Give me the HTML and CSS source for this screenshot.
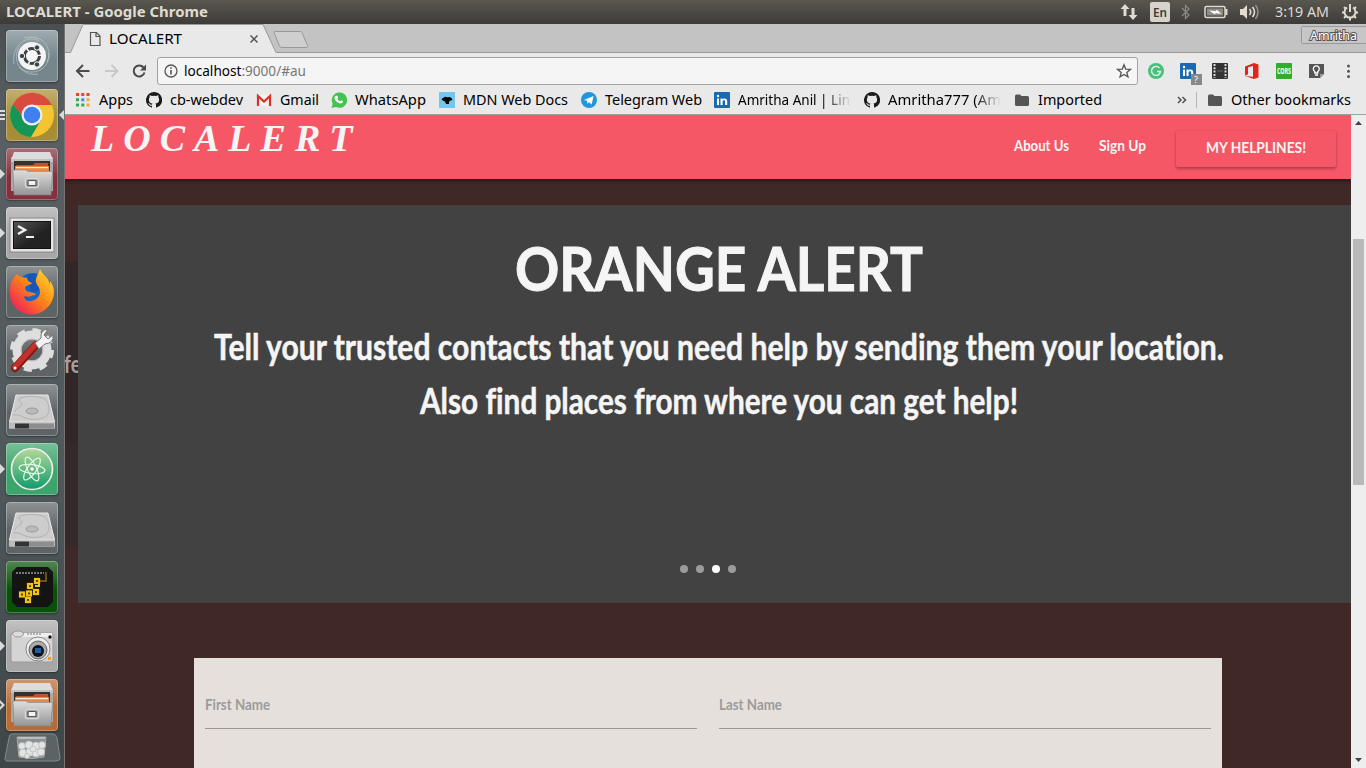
FILE: index.html
```html
<!DOCTYPE html>
<html lang="en">
<head>
<meta charset="utf-8">
<title>LOCALERT</title>
<link rel="stylesheet" href="styles.css">
</head>
<body>
<svg class="defs" width="0" height="0">
  <defs>
    <linearGradient id="metal" x1="0" y1="0" x2="0" y2="1"><stop offset="0" stop-color="#dedede"/><stop offset="1" stop-color="#959595"/></linearGradient>
    <linearGradient id="screen" x1="0" y1="0" x2="1" y2="1"><stop offset="0" stop-color="#555"/><stop offset=".6" stop-color="#222"/></linearGradient>
    <linearGradient id="fox" x1="1" y1="0" x2="0" y2="1"><stop offset="0" stop-color="#ffe83a"/><stop offset=".45" stop-color="#ff8a16"/><stop offset=".8" stop-color="#f4364a"/><stop offset="1" stop-color="#e01a6d"/></linearGradient>
    <linearGradient id="atomg" x1="0" y1="0" x2="0" y2="1"><stop offset="0" stop-color="#b5d89a"/><stop offset="1" stop-color="#0d9b6a"/></linearGradient>
    <symbol id="github" viewBox="0 0 16 16"><path fill="#1b1b1b" d="M8 0a8 8 0 0 0-2.5 15.6c.4.1.5-.2.5-.4v-1.500c-2.200.5-2.700-1-2.700-1-.4-.9-.9-1.200-.9-1.200-.7-.5.1-.5.1-.5.8.1 1.200.8 1.200.8.7 1.300 1.900.9 2.300.7.1-.5.3-.9.5-1.100-1.800-.2-3.600-.9-3.600-4 0-.9.300-1.600.8-2.100-.1-.2-.4-1 .1-2.100 0 0 .7-.2 2.200.8a7.600 7.600 0 0 1 4 0c1.500-1 2.200-.8 2.200-.8.4 1.100.200 1.900.1 2.100.5.6.8 1.300.8 2.100 0 3.100-1.900 3.700-3.700 3.900.3.300.6.8.6 1.500v2.400c0 .2.1.5.6.4A8 8 0 0 0 8 0z"/></symbol>
    <symbol id="folder" viewBox="0 0 16 16"><path fill="#555" d="M1 4q0-1.500 1.500-1.500H6L7.500 4h6Q15 4 15 5.500v7q0 1.500-1.500 1.500h-11Q1 14 1 12.500z"/></symbol>
    <symbol id="linkedin" viewBox="0 0 16 16"><rect width="16" height="16" rx="1" fill="#1b69b3"/><path fill="#fff" d="M3 6.500h2V13H3zM6.500 6.500h2v.9c1-1.600 4.700-1.500 4.700 1.600v4h-2.100V9.600c0-2-2.500-1.800-2.500 0V13H6.500z"/><circle cx="4" cy="4" r="1.200" fill="#fff"/></symbol>
    <symbol id="drawer" viewBox="0 0 52 52"><path d="M5 9h42v34H5z" fill="#a8a8a8"/><path d="M5 12l3-8h36l3 8z" fill="#dcdcdc"/><path d="M5 11h42v3H5z" fill="#c2c2c2"/><path d="M8 13h36v10H8z" fill="#38322f"/><path d="M10 17h17l2-2h13v6H10z" fill="#b9562c"/><path d="M9 18h34v5H9z" fill="#e98747"/><path d="M10 19h32v1.200H10z" fill="#fff1cf"/><path d="M7 22h13l2 1.500h24.500L45 47H8z" fill="url(#metal)" stroke="#858585" stroke-width=".6"/><rect x="19.500" y="30.500" width="13" height="9" rx="2" fill="#999" stroke="#d6d6d6" stroke-width="1.500"/><rect x="22" y="32.500" width="8" height="5" rx="1" fill="#f3f3f3" stroke="#555" stroke-width="1.200"/></symbol>
    <symbol id="disk" viewBox="0 0 52 52"><path d="M10 11h32l7 27v6q0 1-1 1H4q-1 0-1-1v-6z" fill="#a9a9a9"/><path d="M10 11h32l6.500 27h-45z" fill="#cdcdcd" stroke="#e6e6e6" stroke-width="1"/><path d="M13 15c5-4 20-3 26 0 4 3 5 12 3 15-3 6-17 7-25 3-4-2-6-3-10-2M13 15c-1 3 5 4 2 7s-5 2-6 6" fill="none" stroke="#b2b2b2"/><ellipse cx="26" cy="27" rx="6" ry="3" fill="#bbb" stroke="#999"/><path d="M3 39h46v5H3z" fill="#bdbdbd"/><path d="M9 39.500h14v5H9z" fill="#333"/><path d="M23 39.500h25v5H23z" fill="#8d8d8d"/></symbol>
  </defs>
</svg>

<header class="panel">
  <svg class="t" width="202" height="24"><text class="wt" x="0" y="17" textLength="202" lengthAdjust="spacingAndGlyphs">LOCALERT - Google Chrome</text></svg>
  <div class="tray">
    <svg width="18" height="16" viewBox="0 0 18 16" class="net"><path fill="#dfdbd2" d="M5 0l4.500 5H6.500v7h-3V5H.5zM13 16l-4.500-5h3V4h3v7h3z"/></svg>
    <svg width="20" height="20" class="lang"><rect width="20" height="20" rx="2" fill="#d7d3ca"/><text x="3" y="15" textLength="14" lengthAdjust="spacingAndGlyphs">En</text></svg>
    <svg width="10" height="16" viewBox="0 0 10 16" class="bt"><path fill="none" stroke="#8c8980" stroke-width="1.200" d="M1 4l7 7-3.500 3.500v-13L8 5l-7 7"/></svg>
    <svg width="25" height="14" viewBox="0 0 25 14" class="bat"><rect x="1" y="1.500" width="20" height="11" rx="1.500" fill="none" stroke="#dfdbd2" stroke-width="1.500"/><rect x="3" y="3.500" width="16" height="7" fill="#8f8c84"/><path d="M22.500 4v6" stroke="#dfdbd2" stroke-width="2"/><path fill="#fff" d="M5 5.500l7 .8.500-1.800 5 4.500-6-1-.5 1.500z"/></svg>
    <svg width="20" height="16" viewBox="0 0 20 16" class="vol"><path fill="#dfdbd2" d="M0 5h3l4-4v14l-4-4H0z"/><path fill="none" stroke="#dfdbd2" stroke-width="1.600" d="M9.500 5q2.500 3 0 6M12.500 3q4 5 0 10"/><path fill="none" stroke="#918e86" stroke-width="1.600" d="M15.500 1q5 7 0 14"/></svg>
    <svg class="t clock" width="54" height="24"><text x="0" y="17" textLength="54" lengthAdjust="spacingAndGlyphs">3:19 AM</text></svg>
    <svg width="18" height="18" viewBox="0 0 18 18" class="power"><g fill="none" stroke="#dfdbd2"><path stroke-width="2" d="M6 4.500a5.500 5.500 0 1 0 6 0"/><path stroke-width="2" d="M9 1v8"/><path stroke-width="2" d="M1 9.500h3M14 9.500h3M9 14.500v3M3 4l2 2M15 4l-2 2M3 15l2-2M15 15l-2-2"/></g></svg>
  </div>
</header>

<div class="desk">
<aside class="launcher">
  <div class="tile slate"><svg viewBox="0 0 52 52"><g fill="none" stroke="#cbd5d8" stroke-opacity=".55"><path d="M8 34C5 15 22 4 33 11M18 8c20-5 29 12 23 24M43 23c1 19-20 24-30 14M32 44c-16 3-28-14-18-28"/></g><circle cx="26" cy="26" r="14" fill="#f4f4f4"/><circle cx="26" cy="26" r="7.500" fill="none" stroke="#3a4447" stroke-width="3" stroke-dasharray="14 1.700"/><g fill="#3a4447" stroke="#f4f4f4"><circle cx="16" cy="26" r="2.700"/><circle cx="31" cy="17.500" r="2.700"/><circle cx="31" cy="34.500" r="2.700"/></g></svg></div>
  <div class="tile gold"><i class="running triple"></i><i class="focus"></i><svg viewBox="0 0 52 52"><circle cx="26" cy="26" r="22" fill="#f5c431"/><path d="M7 15A22 22 0 0 1 46 16H26L17 31z" fill="#d94a3f"/><path d="M7 15A22 22 0 0 0 25 48l10-17-17-1z" fill="#159556"/><circle cx="26" cy="26" r="10.500" fill="#f0f0f0"/><circle cx="26" cy="26" r="8.300" fill="#4080ee"/></svg></div>
  <div class="tile wine"><i class="running"></i><svg><use href="#drawer"/></svg></div>
  <div class="tile silver"><i class="running"></i><svg viewBox="0 0 52 52"><rect x="4" y="11" width="44" height="34" fill="#e4e4e4" stroke="#888"/><rect x="7.500" y="14.500" width="37" height="27" fill="url(#screen)" stroke="#111"/><path d="M12 19l7 4-7 4" fill="none" stroke="#eee" stroke-width="2.500"/><path d="M20 30h8" stroke="#eee" stroke-width="2"/></svg></div>
  <div class="tile gray"><svg viewBox="0 0 52 52"><circle cx="27" cy="24" r="17" fill="#1267cf"/><path d="M21 9q9-3 14 2v12l-10 4z" fill="#1a55b5"/><path d="M34 3c-2 6-7 11-2 17 4 6 2 13-7 15-6 1-8-4-6-5 5 2 6-1 11-1-1-4-11-1-11-7 0-3 6-3 7-5-2-1-5-2-5-5-5-1-8-1-10-4C1 17 2 34 10 42c11 11 28 7 35-5 5-9 3-17-1-22v4C42 10 37 10 34 3z" fill="url(#fox)"/></svg></div>
  <div class="tile gray"><svg viewBox="0 0 52 52"><circle cx="26" cy="25" r="15" fill="none" stroke="#dedede" stroke-width="9"/><circle cx="26" cy="25" r="20" fill="none" stroke="#dedede" stroke-width="4" stroke-dasharray="8 7.700"/><circle cx="26" cy="25" r="11" fill="none" stroke="#b9b9b9"/><path d="M9 43l21-23" stroke="#8c1715" stroke-width="8" stroke-linecap="round"/><path d="M9 42l21-23" stroke="#c2322c" stroke-width="5.500" stroke-linecap="round"/><circle cx="9" cy="43" r="1.500" fill="#fff"/><path d="M29 18l6-5q-1-8 7-9l-4 6 4 4 5-4q1 8-8 9l-6 5z" fill="#f2f2f2" stroke="#777"/></svg></div>
  <div class="tile gray"><svg><use href="#disk"/></svg></div>
  <div class="tile green"><i class="running"></i><svg viewBox="0 0 52 52"><circle cx="26" cy="26" r="20.500" fill="url(#atomg)" stroke="#ededed" stroke-width="1.700"/><g fill="none" stroke="#e8fae9" stroke-width="1.200" transform="translate(26 26)"><ellipse rx="13" ry="4.500" transform="rotate(7)"/><ellipse rx="13" ry="4.500" transform="rotate(65)"/><ellipse rx="13" ry="4.500" transform="rotate(-55)"/></g><circle cx="26" cy="26" r="1.800" fill="#fff"/></svg></div>
  <div class="tile gray"><svg><use href="#disk"/></svg></div>
  <div class="tile board"><svg viewBox="0 0 52 52"><path d="M11 6h31l5 5v30l-5 5H11l-5-5V11z" fill="#141414"/><path d="M10 12h28" stroke="#777" stroke-width="2" stroke-dasharray="2 1"/><path d="M32 20h8v-9" fill="none" stroke="#8a6a0c" stroke-width="1.500"/><g fill="#3c3100" stroke="#f1c40f" stroke-width="2.200"><rect x="29" y="18" width="4" height="4"/><rect x="22" y="23" width="4" height="4"/><rect x="28" y="29" width="4" height="4"/><rect x="21" y="30.500" width="4" height="4"/><rect x="14" y="31.500" width="4" height="4"/><rect x="20" y="37" width="4" height="4"/></g><path d="M33 19v6h-4" fill="none" stroke="#f1c40f" stroke-width="2"/></svg></div>
  <div class="tile silver"><i class="running"></i><svg viewBox="0 0 52 52"><rect x="5" y="13" width="42" height="29" rx="2" fill="#d4d4d4" stroke="#999"/><path d="M6 13h40v4H6z" fill="#eee"/><ellipse cx="12" cy="14" rx="5.500" ry="3" fill="#ddd" stroke="#999"/><path d="M21 14h15" stroke="#777" stroke-dasharray="2 1"/><circle cx="32" cy="29" r="12" fill="#eee" stroke="#888"/><circle cx="32" cy="30" r="9" fill="#aaa" stroke="#666"/><circle cx="32" cy="31" r="6" fill="#111"/><rect x="29" y="28" width="6" height="5" fill="#215cae"/><circle cx="44" cy="17" r="1.700" fill="#111"/><rect x="42" y="37" width="3" height="3" fill="#f29b1f"/></svg></div>
  <div class="tile orange"><i class="running open"></i><svg><use href="#drawer"/></svg></div>
  <svg class="trash" width="57" height="30" viewBox="0 0 57 30"><path d="M8 1h41q3 0 4 4l3 20q0 3-4 3H4q-4 0-3-3L5 5q0-4 3-4z" fill="#5c6364" stroke="#838989"/><path d="M13 4h29l-2 20q-12 3-25 0z" fill="#8b9191" stroke="#aaa"/><path d="M14 5h27" stroke="#e4e4e4"/><g fill="#e3e5e3" stroke="#b4b8b6" stroke-width=".7"><circle cx="18" cy="13" r="3.500"/><circle cx="25" cy="12" r="4"/><circle cx="32" cy="13" r="4"/><circle cx="38" cy="12" r="3.500"/><circle cx="19" cy="20" r="4"/><circle cx="26" cy="19" r="4"/><circle cx="32" cy="20" r="4"/><circle cx="37" cy="19" r="3.700"/><circle cx="23" cy="23" r="2.500"/><circle cx="29" cy="16" r="3"/></g></svg>
</aside>

<main class="browser">
  <div class="tabs">
    <svg class="tabshape" width="246" height="29" viewBox="0 0 246 29"><path d="M0 28.500h5.500L18 .5h180l13 28H246V29H0z" fill="#e9e9e9"/><path d="M0 28.500h5.500L18 .5h180l13 28H246" fill="none" stroke="#999"/><path d="M209.500 7.500H235q1.500 0 2 1l5.500 13q.5 2-1 2H217q-2 0-2.500-1.500l-5-12.500q-.5-2 0-2z" fill="#cfcfcf" stroke="#999"/><path d="M25.500 8.500h6l3.500 3.500v9.500h-9.500zM31 8.500V12.500h4" fill="none" stroke="#555" stroke-width="1.200"/><path d="M185.500 11.500l7 7M192.500 11.500l-7 7" stroke="#555" stroke-width="1.500"/><text x="44" y="20" textLength="73" lengthAdjust="spacingAndGlyphs">LOCALERT</text></svg>
    <svg class="user" width="65" height="19"><rect x=".5" y=".5" width="66" height="17" rx="1" fill="#c6c6c6" stroke="#999"/><text x="9" y="14" textLength="47" lengthAdjust="spacingAndGlyphs">Amritha</text></svg>
  </div>
  <div class="toolbar">
    <svg class="arrows" width="76" height="16" viewBox="0 0 76 16"><path d="M17.500 8H5M11 2L5 8l6 6" fill="none" stroke="#4b4b4b" stroke-width="2"/><path d="M33 8h12.500M39.500 2l6 6-6 6" fill="none" stroke="#c8c8c8" stroke-width="2"/><path d="M71.500 4.500A5.500 5.500 0 1 0 72.500 9.500" fill="none" stroke="#4b4b4b" stroke-width="2"/><path d="M74 1.500v6h-6z" fill="#4b4b4b"/></svg>
    <div class="address">
      <svg width="14" height="14" viewBox="0 0 14 14"><circle cx="7" cy="7" r="6" fill="none" stroke="#555" stroke-width="1.300"/><path d="M7 6v4.500M7 3.300v1.500" stroke="#555" stroke-width="1.600"/></svg>
      <svg class="t url" width="122" height="26"><text x="0" y="18" textLength="122" lengthAdjust="spacingAndGlyphs">localhost<tspan class="dim">:9000/#au</tspan></text></svg>
      <svg class="star" width="16" height="16" viewBox="0 0 16 16"><path d="M8 1.800l1.700 4.300 4.700.3-3.600 3 1.200 4.500L8 11.400l-4 2.500 1.200-4.500-3.600-3 4.700-.3z" fill="none" stroke="#555" stroke-width="1.300"/></svg>
    </div>
    <div class="exts">
      <svg viewBox="0 0 16 16"><circle cx="8" cy="8" r="8" fill="#4bbf7b"/><path d="M11.500 5A4.500 4.500 0 1 0 12.500 8.500H9" fill="none" stroke="#e6f8ec" stroke-width="1.400"/></svg>
      <svg viewBox="0 0 16 16"><use href="#linkedin"/><rect x="11" y="11" width="11" height="11" fill="#888"/><text class="q" x="14" y="20">?</text></svg>
      <svg viewBox="0 0 16 16"><rect width="16" height="16" rx="1" fill="#333"/><path d="M2.500 1v14M13.500 1v14" stroke="#ddd" stroke-width="2" stroke-dasharray="2 1.300"/><path d="M5 8h6" stroke="#666"/></svg>
      <svg viewBox="0 0 16 16"><path fill="#e32419" d="M1 3.500L10 0l4.500 1.500v13L10 16l-9-3 8 .8V3L4 4.300v7L1 12.700z"/></svg>
      <svg viewBox="0 0 16 16"><rect width="16" height="16" rx="1" fill="#2fad2b"/><text class="cors" x="1" y="11" textLength="14" lengthAdjust="spacingAndGlyphs">CORS</text></svg>
      <svg viewBox="0 0 16 16"><path fill="#555" d="M1 1h15v10l-4 4H1z"/><path fill="#999" d="M12 15v-4h4z"/><path d="M6.800 10V8.500a3 3 0 1 1 3 0V10zM7 12h3" fill="none" stroke="#fff" stroke-width="1.300"/></svg>
      <svg viewBox="0 0 16 16"><g fill="#555"><circle cx="8.500" cy="3" r="1.500"/><circle cx="8.500" cy="8.300" r="1.500"/><circle cx="8.500" cy="13.500" r="1.500"/></g></svg>
    </div>
  </div>
  <nav class="marks">
    <a><svg viewBox="0 0 16 16"><g><path fill="#ea4325" d="M1 1h3v3H1zM6.300 1h3v3h-3zM11.500 1h3v3h-3z"/><path fill="#34a853" d="M1 6.300h3v3H1zM1 11.500h3v3H1z"/><path fill="#4285f4" d="M6.300 6.300h3v3h-3z"/><path fill="#f5ab2d" d="M11.500 6.300h3v3h-3zM11.500 11.500h3v3h-3z"/><path fill="#34a853" d="M6.300 11.500h3v3h-3z"/></g></svg><svg class="t" width="34" height="20"><text y="15" textLength="34" lengthAdjust="spacingAndGlyphs">Apps</text></svg></a>
    <a><svg><use href="#github"/></svg><svg class="t" width="73" height="20"><text y="15" textLength="73" lengthAdjust="spacingAndGlyphs">cb-webdev</text></svg></a>
    <a><svg viewBox="0 0 16 16"><path fill="#f3f3f3" d="M1 3h14v11H1z"/><path fill="none" stroke="#d93025" stroke-width="2.200" d="M2 14V4l6 5.500L14 4v10"/></svg><svg class="t" width="38" height="20"><text y="15" textLength="39" lengthAdjust="spacingAndGlyphs">Gmail</text></svg></a>
    <a><svg viewBox="0 0 16 16"><path fill="#43c351" d="M.5 16l1.200-4.200A7.700 7.700 0 1 1 5 15z"/><path fill="#fff" d="M5 3.700l1.300.1.900 2-.9 1.100q.9 1.800 2.900 2.500l.9-1.100 2 1q-.1 2-2 2.200C6 11.300 3 7.500 3.700 5.200Q4 4 5 3.700z"/></svg><svg class="t" width="71" height="20"><text y="15" textLength="71" lengthAdjust="spacingAndGlyphs">WhatsApp</text></svg></a>
    <a><svg viewBox="0 0 16 16"><path fill="#75c6ec" d="M0 0h16v16H0z"/><path d="M2.500 7l3.500-2.300 2.500.5 2.500-.2 2.500 2.200-1 1.300-2 .2-.7 3.300H7L6 9.500 4 8.700z"/></svg><svg class="t" width="105" height="20"><text y="15" textLength="105" lengthAdjust="spacingAndGlyphs">MDN Web Docs</text></svg></a>
    <a><svg viewBox="0 0 16 16"><circle cx="8" cy="8" r="8" fill="#2196dc"/><path fill="#fff" d="M3 8l9.500-4-1.800 8.500L8 10.300l-1.700 1.500-.3-3z"/></svg><svg class="t" width="96" height="20"><text y="15" textLength="97" lengthAdjust="spacingAndGlyphs">Telegram Web</text></svg></a>
    <a><svg><use href="#linkedin"/></svg><svg class="t fade" width="113" height="20"><text y="15" textLength="112" lengthAdjust="spacingAndGlyphs">Amritha Anil | Lin</text></svg></a>
    <a><svg><use href="#github"/></svg><svg class="t fade" width="113" height="20"><text y="15" textLength="113" lengthAdjust="spacingAndGlyphs">Amritha777 (Am</text></svg></a>
    <a><svg><use href="#folder"/></svg><svg class="t" width="64" height="20"><text y="15" textLength="64" lengthAdjust="spacingAndGlyphs">Imported</text></svg></a>
    <a class="more"><svg viewBox="0 0 16 16"><path d="M4 5l3 3-3 3M8.500 5l3 3-3 3" fill="none" stroke="#555" stroke-width="1.600"/></svg></a>
    <a class="other"><svg><use href="#folder"/></svg><svg class="t" width="120" height="20"><text y="15" textLength="120" lengthAdjust="spacingAndGlyphs">Other bookmarks</text></svg></a>
  </nav>

  <div class="viewport">
    <div class="page">
      <nav class="site">
        <a class="brand">LOCALERT</a>
        <a><svg class="t" width="55" height="24"><text y="17" textLength="55" lengthAdjust="spacingAndGlyphs">About Us</text></svg></a>
        <a><svg class="t" width="47" height="24"><text y="17" textLength="47" lengthAdjust="spacingAndGlyphs">Sign Up</text></svg></a>
        <a class="btn"><svg class="t" width="100" height="24"><text y="17" textLength="100" lengthAdjust="spacingAndGlyphs">MY HELPLINES!</text></svg></a>
      </nav>
      <section class="carousel">
        <div class="peek"><svg class="t" width="14" height="30"><text x="-1" y="25" textLength="17" lengthAdjust="spacingAndGlyphs">fe</text></svg></div>
        <div class="slide">
          <h2><svg class="t" width="408" height="60"><text y="50" textLength="408" lengthAdjust="spacingAndGlyphs">ORANGE ALERT</text></svg></h2>
          <p><svg class="t" width="1010" height="54"><text y="38" textLength="1010" lengthAdjust="spacingAndGlyphs">Tell your trusted contacts that you need help by sending them your location.</text></svg></p>
          <p><svg class="t" width="598" height="54"><text y="38" textLength="598" lengthAdjust="spacingAndGlyphs">Also find places from where you can get help!</text></svg></p>
          <div class="dots"><i></i><i></i><i class="on"></i><i></i></div>
        </div>
      </section>
      <form class="card">
        <label><svg class="t" width="65" height="20"><text y="16" textLength="65" lengthAdjust="spacingAndGlyphs">First Name</text></svg></label>
        <label><svg class="t" width="63" height="20"><text y="16" textLength="63" lengthAdjust="spacingAndGlyphs">Last Name</text></svg></label>
      </form>
    </div>
    <div class="scroll"><svg width="15" height="16"><path d="M4 10l3.500-4 3.500 4z" fill="#444"/></svg><i></i><svg width="15" height="16"><path d="M4 6l3.500 4L11 6z" fill="#444"/></svg></div>
  </div>
</main>
</div>
</body>
</html>
```
FILE: styles.css
```css
* { box-sizing: border-box; }
body { margin: 0; width: 1366px; height: 768px; overflow: hidden; display: flex; flex-direction: column; font-family: "Noto Sans", sans-serif; font-size: 14.5px; background: #3f2825; }
.defs { position: absolute; }
svg { display: block; flex: none; }
.t { overflow: visible; }
i { display: block; }

.panel { height: 24px; flex: none; display: flex; justify-content: space-between; padding: 0 7px 0 6px; background: linear-gradient(#5a574f, #3c3b37); fill: #dfdbd2; }
.wt { font-weight: 700; font-size: 14px; }
.tray { display: flex; align-items: center; }
.net { margin-right: 12px; }
.lang { margin-right: 11px; font-size: 12.5px; fill: #3c3b37; stroke: none; font-weight: 600; }
.bt { margin-right: 13px; }
.bat { margin-right: 11px; }
.vol { margin-right: 15px; }
.clock { margin-right: 12px; font-size: 14px; }

.desk { display: flex; flex: 1; min-height: 0; }
.launcher { width: 65px; flex: none; padding: 6px 0 0 6px; display: flex; flex-direction: column; gap: 7px; background: linear-gradient(#4b4f51, #596064 15%, #4f585b 60%, #3e4648); border-right: 1px solid #777373; }
.tile { position: relative; width: 52px; height: 52px; flex: none; border-radius: 4px; box-shadow: inset 0 0 0 1px rgba(255,255,255,.28), 0 1px 2px rgba(0,0,0,.35); background-image: linear-gradient(rgba(255,255,255,.3), rgba(255,255,255,0) 55%); }
.tile > svg { width: 52px; height: 52px; }
.slate { background-color: #75878d; }
.gold { background-color: #a88d37; }
.wine { background-color: #85303d; }
.silver { background-color: #a7a7a7; }
.gray { background-color: #5e6365; }
.green { background-color: #3da56c; }
.board { background-color: #075207; }
.orange { background-color: #b96b33; }
.running { position: absolute; left: -6px; top: 21px; border: 5px solid transparent; border-left-color: #dadada; border-right: 0; }
.triple { border: 0; width: 5px; height: 11px; background: repeating-linear-gradient(#ddd 0 2px, transparent 2px 4px); }
.open::after { content: ""; position: absolute; left: -6px; top: -3px; border: 3px solid transparent; border-left-color: #4a5051; border-right: 0; }
.focus { position: absolute; right: -6px; top: 21px; border: 5px solid transparent; border-right-color: #dadada; border-left: 0; }
.trash { margin: -5px 0 0 -2px; }

.browser { flex: 1; min-width: 0; display: flex; flex-direction: column; background: #e9e9e9; }
.tabs { height: 29px; flex: none; display: flex; justify-content: space-between; background: linear-gradient(#c3c3c3 28px, #999 28px); }
.tabs text { font-size: 14px; }
.user { margin-top: 2px; }
.user text { font-size: 12.5px; fill: #fff; stroke: #555; stroke-width: 2px; paint-order: stroke; }
.toolbar { height: 35px; flex: none; display: flex; align-items: center; padding: 1px 10px 0 7px; }
.arrows { margin-right: 9px; }
.address { width: 981px; height: 28px; display: flex; align-items: center; border: 1px solid #a3a3a3; border-radius: 3px; background: #f5f5f5; padding: 0 5px 0 6px; }
.url { margin-left: 6px; }
.dim { fill: #777; }
.star { margin-left: auto; }
.exts { display: flex; gap: 16px; margin-left: 10px; }
.exts svg { width: 16px; height: 16px; overflow: visible; }
.q { font-size: 9px; fill: #fff; }
.cors { font-size: 8px; font-weight: 700; fill: #fff; }
.marks { height: 27px; flex: none; display: flex; gap: 13px; padding: 0 15px 0 10px; border-bottom: 1px solid #a0a0a0; }
.marks a { display: flex; gap: 8px; align-items: center; height: 24px; }
.marks svg:not(.t) { width: 16px; height: 16px; }
.fade { -webkit-mask-image: linear-gradient(90deg, #000 76%, transparent); mask-image: linear-gradient(90deg, #000 76%, transparent); }
.marks .more { margin-left: auto; margin-right: -7px; }
.marks .other { border-left: 1px solid #b5b5b5; padding-left: 10px; height: 16px; margin-top: 4px; }

.viewport { flex: 1; display: flex; min-height: 0; }
.page { width: 1286px; overflow: hidden; background: #3f2825; font-family: Lato, sans-serif; font-weight: 700; font-variant-ligatures: none; }
.site { position: relative; height: 64px; display: flex; align-items: flex-start; background: #f55767; fill: #f5f5f5; font-size: 15.5px; box-shadow: 0 2px 4px rgba(0,0,0,.4); padding-right: 15px; }
.site a { margin: 19px 30px 0 0; }
.site .brand { margin: 0 auto 0 26px; font: italic 700 38px/47px "Liberation Serif", serif; letter-spacing: 9px; color: #f5f5f5; }
.site .btn { margin: 16px 0 0; height: 36px; width: 160px; display: flex; justify-content: center; padding-top: 5px; border-radius: 2px; box-shadow: 0 2px 3px rgba(0,0,0,.26), 0 0 2px rgba(0,0,0,.14); }
.carousel { position: relative; padding: 26px 0 0 13px; }
.peek { position: absolute; left: 0; top: 82px; width: 13px; height: 285px; padding-top: 87px; overflow: hidden; background: linear-gradient(#322728 182px, #352a2a 182px); font-size: 25px; fill: #a79fa0; }
.slide { height: 398px; background: #424242; fill: #f5f5f5; stroke: #f5f5f5; stroke-width: .5px; display: flex; flex-direction: column; align-items: center; padding: 36px 0 0 9px; }
.slide h2 { margin: 0 0 21px; font-size: 61.5px; stroke-width: 1px; }
.slide p { margin: 0; font-size: 35.5px; height: 54px; }
.dots { display: flex; gap: 8px; margin: 135px 23px 0 0; }
.dots i { width: 8px; height: 8px; border-radius: 50%; background: #9b9b9b; }
.dots .on { background: #fff; }
.card { margin: 55px 0 0 129px; width: 1028px; height: 120px; background: #e6e0dd; display: flex; gap: 22px; padding: 36px 11px 0; }
.card label { flex: 1; height: 35px; border-bottom: 1px solid #9b9794; fill: #9b9b9b; font-size: 15.5px; }
.scroll { width: 15px; background: #eee; display: flex; flex-direction: column; }
.scroll i { width: 11px; height: 246px; margin: 108px 0 auto 2px; background: #b9b9b9; }
```
